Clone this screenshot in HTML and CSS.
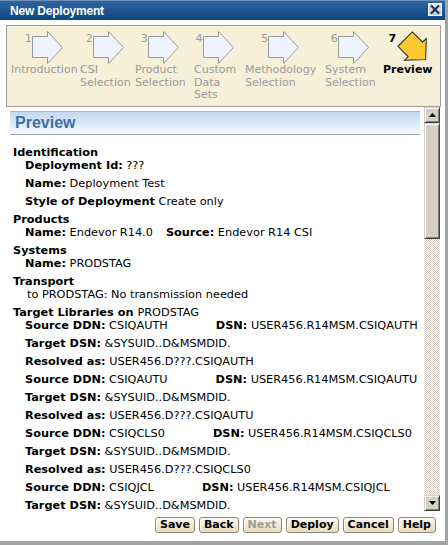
FILE: index.html
```html
<!DOCTYPE html>
<html>
<head>
<meta charset="utf-8">
<link rel="stylesheet" href="styles.css">
</head>
<body>
<div class="dialog">
  <div class="titlebar">
    <span class="title">New Deployment</span>
    <span class="close"><svg width="12" height="11" viewBox="0 0 12 11"><path d="M2 1.5 L10 9.5 M10 1.5 L2 9.5" stroke="#1c2e4a" stroke-width="2" fill="none"/></svg></span>
  </div>

  <div class="steps">
    <div class="step s1"><div class="step-in">
      <div class="step-icon"><span class="num">1</span><svg class="arrow" width="32" height="34" viewBox="0 0 32 34"><polygon points="0.5,5.5 15.5,5.5 15.5,0.5 30.5,16.5 15.5,32.5 15.5,26.5 0.5,26.5" fill="#eef3fd" stroke="#9a9a9a"/></svg></div>
      <div class="label">Introduction</div>
    </div></div>
    <div class="step s2"><div class="step-in">
      <div class="step-icon"><span class="num">2</span><svg class="arrow" width="32" height="34" viewBox="0 0 32 34"><polygon points="0.5,5.5 15.5,5.5 15.5,0.5 30.5,16.5 15.5,32.5 15.5,26.5 0.5,26.5" fill="#eef3fd" stroke="#9a9a9a"/></svg></div>
      <div class="label">CSI Selection</div>
    </div></div>
    <div class="step s3"><div class="step-in">
      <div class="step-icon"><span class="num">3</span><svg class="arrow" width="32" height="34" viewBox="0 0 32 34"><polygon points="0.5,5.5 15.5,5.5 15.5,0.5 30.5,16.5 15.5,32.5 15.5,26.5 0.5,26.5" fill="#eef3fd" stroke="#9a9a9a"/></svg></div>
      <div class="label">Product Selection</div>
    </div></div>
    <div class="step s4"><div class="step-in">
      <div class="step-icon"><span class="num">4</span><svg class="arrow" width="32" height="34" viewBox="0 0 32 34"><polygon points="0.5,5.5 15.5,5.5 15.5,0.5 30.5,16.5 15.5,32.5 15.5,26.5 0.5,26.5" fill="#eef3fd" stroke="#9a9a9a"/></svg></div>
      <div class="label">Custom Data Sets</div>
    </div></div>
    <div class="step s5"><div class="step-in">
      <div class="step-icon"><span class="num">5</span><svg class="arrow" width="32" height="34" viewBox="0 0 32 34"><polygon points="0.5,5.5 15.5,5.5 15.5,0.5 30.5,16.5 15.5,32.5 15.5,26.5 0.5,26.5" fill="#eef3fd" stroke="#9a9a9a"/></svg></div>
      <div class="label">Methodology Selection</div>
    </div></div>
    <div class="step s6"><div class="step-in">
      <div class="step-icon"><span class="num">6</span><svg class="arrow" width="32" height="34" viewBox="0 0 32 34"><polygon points="0.5,5.5 15.5,5.5 15.5,0.5 30.5,16.5 15.5,32.5 15.5,26.5 0.5,26.5" fill="#eef3fd" stroke="#9a9a9a"/></svg></div>
      <div class="label">System Selection</div>
    </div></div>
    <div class="step s7 current"><div class="step-in">
      <div class="step-icon"><span class="num">7</span><svg class="gem" width="30" height="30" viewBox="-19 -19 31 31"><polygon transform="rotate(45)" points="-15,-10.5 0,-10.5 0,-16 15,0 0,16 0,10.5 -15,10.5" fill="#fdc832" stroke="#222" stroke-width="1"/></svg></div>
      <div class="label">Preview</div>
    </div></div>
  </div>

  <div class="scroll">
    <div class="content">
      <div class="section-head">Preview</div>
      <div class="details">
        <div class="gh">Identification</div>
        <div class="item"><b>Deployment Id:</b> ???</div>
        <div class="item"><b>Name:</b> Deployment Test</div>
        <div class="item"><b>Style of Deployment</b> Create only</div>

        <div class="gh">Products</div>
        <div class="item"><b>Name:</b> Endevor R14.0<span class="src"><b>Source:</b> Endevor R14 CSI</span></div>

        <div class="gh">Systems</div>
        <div class="item"><b>Name:</b> PRODSTAG</div>

        <div class="gh">Transport</div>
        <div class="item plain">to PRODSTAG: No transmission needed</div>

        <div class="gh">Target Libraries on <span class="normal">PRODSTAG</span></div>
        <div class="item"><b>Source DDN:</b> CSIQAUTH<span class="dsn"><b>DSN:</b> USER456.R14MSM.CSIQAUTH</span></div>
        <div class="item"><b>Target DSN:</b> &amp;SYSUID..D&amp;MSMDID.</div>
        <div class="item"><b>Resolved as:</b> USER456.D???.CSIQAUTH</div>
        <div class="item"><b>Source DDN:</b> CSIQAUTU<span class="dsn"><b>DSN:</b> USER456.R14MSM.CSIQAUTU</span></div>
        <div class="item"><b>Target DSN:</b> &amp;SYSUID..D&amp;MSMDID.</div>
        <div class="item"><b>Resolved as:</b> USER456.D???.CSIQAUTU</div>
        <div class="item"><b>Source DDN:</b> CSIQCLS0<span class="dsn"><b>DSN:</b> USER456.R14MSM.CSIQCLS0</span></div>
        <div class="item"><b>Target DSN:</b> &amp;SYSUID..D&amp;MSMDID.</div>
        <div class="item"><b>Resolved as:</b> USER456.D???.CSIQCLS0</div>
        <div class="item"><b>Source DDN:</b> CSIQJCL<span class="dsn"><b>DSN:</b> USER456.R14MSM.CSIQJCL</span></div>
        <div class="item last"><b>Target DSN:</b> &amp;SYSUID..D&amp;MSMDID.</div>
      </div>
    </div>
    <div class="scrollbar">
      <div class="sb-btn"><svg width="7" height="4" viewBox="0 0 7 4"><polygon points="3.5,0 7,4 0,4" fill="#000"/></svg></div>
      <div class="sb-thumb"></div>
      <div class="sb-track"></div>
      <div class="sb-btn"><svg width="7" height="4" viewBox="0 0 7 4"><polygon points="0,0 7,0 3.5,4" fill="#000"/></svg></div>
    </div>
  </div>

  <div class="buttons">
    <span class="btn">Save</span>
    <span class="btn">Back</span>
    <span class="btn disabled">Next</span>
    <span class="btn">Deploy</span>
    <span class="btn">Cancel</span>
    <span class="btn">Help</span>
  </div>
</div>
</body>
</html>
```

FILE: styles.css
```css
html, body {
  margin: 0;
  padding: 0;
}
body {
  background: #a3a3a3;
  width: 448px;
  height: 545px;
  overflow: hidden;
  font-family: "DejaVu Sans", Verdana, sans-serif;
  font-size: 11px;
  color: #000;
}
.dialog {
  width: 445px;
  height: 541px;
  background: #fff;
  overflow: hidden;
}
.titlebar {
  height: 20px;
  box-sizing: border-box;
  border-top: 1px solid #6f8fb5;
  background: linear-gradient(#2f64a3, #0d467f);
  display: flex;
  align-items: center;
  justify-content: space-between;
  padding: 0 3px 0 10px;
}
.title {
  font-family: "Liberation Sans", Arial, sans-serif;
  font-weight: bold;
  font-size: 12px;
  color: #fff;
  letter-spacing: -0.2px;
}
.close {
  width: 14px;
  height: 13px;
  box-sizing: border-box;
  border: 1px solid #f4f6fa;
  background: linear-gradient(#dfe7f1, #b9c8dc);
  display: flex;
  align-items: center;
  justify-content: center;
  margin-top: -2px;
}
.close svg { display: block; }

.steps {
  margin: 5px 0 0 6px;
  width: 435px;
  height: 82px;
  box-sizing: border-box;
  border: 1px solid #9c9c9c;
  background: #f6f0d9;
  display: flex;
  padding: 5px 0 0 4px;
}
.step { flex: none; }
.s1 { width: 69px; }
.s2 { width: 55px; }
.s3 { width: 59px; }
.s4 { width: 51px; }
.s5 { width: 80px; }
.s6 { width: 58px; }
.s7 { width: 56px; }
.step-in { width: min-content; }
.step-icon {
  display: flex;
  justify-content: center;
  align-items: flex-start;
  height: 33px;
}
.num {
  color: #9a9a9a;
  line-height: 13px;
  margin-top: 1px;
}
.arrow { display: block; }
.gem { display: block; margin-left: 1px; }
.label {
  color: #9a9a9a;
  line-height: 12.5px;
}
.current .num { color: #000; font-weight: bold; }
.current .label { color: #000; font-weight: bold; }

.scroll {
  margin-left: 10px;
  width: 430px;
  height: 404px;
  display: flex;
}
.content {
  flex: 1;
  overflow: hidden;
  margin-right: 4px;
}
.section-head {
  margin-top: 4px;
  height: 24px;
  box-sizing: border-box;
  border-top: 1px solid #a8b4c0;
  border-bottom: 1px solid #9aa3ad;
  background: linear-gradient(#c2d8f2, #f3f9ff);
  font-family: "Liberation Sans", Arial, sans-serif;
  font-weight: bold;
  font-size: 16px;
  line-height: 22px;
  color: #3f6fa6;
  padding-left: 5px;
}
.details {
  padding: 11px 0 0 3px;
  font-size: 11.3px;
  line-height: 13px;
  white-space: nowrap;
}
.gh { font-weight: bold; }
.normal { font-weight: normal; }
.item {
  padding-left: 12px;
  margin-bottom: 5px;
}
.item.last { margin-bottom: 0; }
.item.plain { padding-left: 14px; }
.src { margin-left: 13px; }
.dsn { margin-left: 48px; }

.scrollbar {
  width: 16px;
  display: flex;
  flex-direction: column;
}
.sb-btn, .sb-thumb {
  box-sizing: border-box;
  background: #d4d0c8;
  border: 1px solid;
  border-color: #d4d0c8 #404040 #404040 #d4d0c8;
  box-shadow: inset 1px 1px #fff, inset -1px -1px #808080;
}
.sb-btn {
  height: 16px;
  display: flex;
  align-items: center;
  justify-content: center;
}
.sb-btn svg { display: block; }
.sb-thumb { height: 116px; }
.sb-track {
  flex: 1;
  background: repeating-conic-gradient(#d4d0c8 0% 25%, #ffffff 0% 50%) 0 0 / 2px 2px;
}

.buttons {
  margin-top: 6px;
  display: flex;
  justify-content: flex-end;
  gap: 4px;
  padding-right: 9px;
}
.btn {
  height: 16px;
  box-sizing: border-box;
  border: 1px solid #8e8778;
  border-radius: 3px;
  background: linear-gradient(#fdf7ea, #eadbbd);
  box-shadow: inset 1px 1px #fffdf7;
  font-weight: bold;
  font-size: 11px;
  line-height: 14px;
  padding: 0 4px;
  color: #000;
}
.btn.disabled { color: #a09c94; }
```
